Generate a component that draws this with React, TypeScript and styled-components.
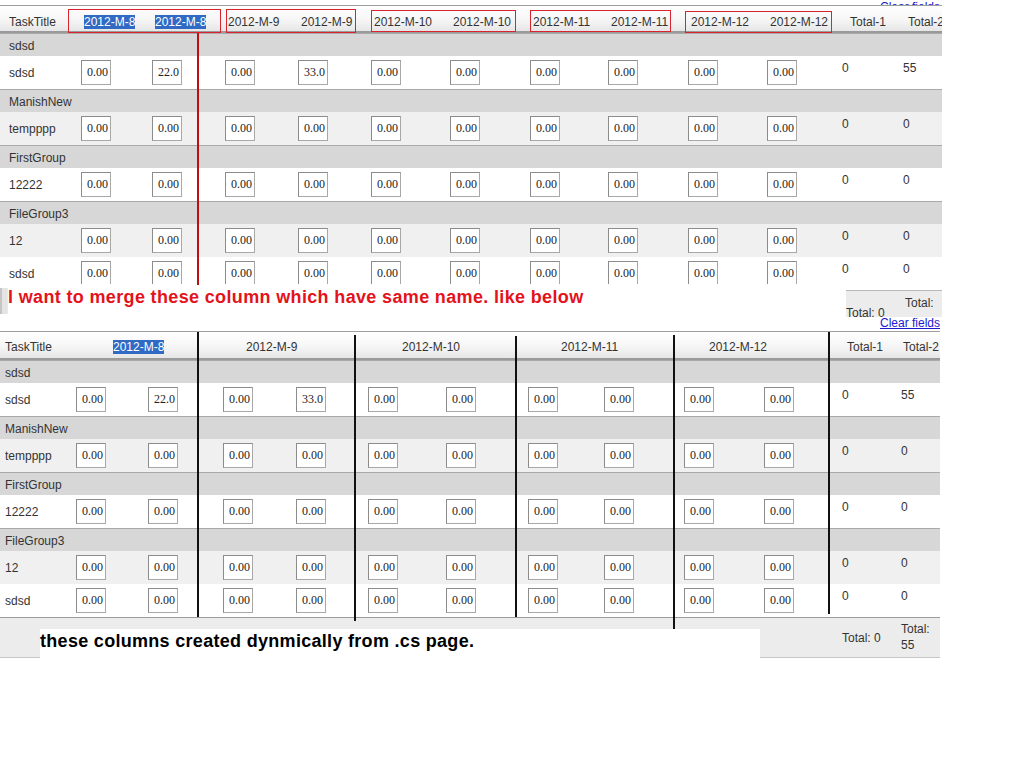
import React from 'react';
import styled, { createGlobalStyle } from 'styled-components';

const GlobalStyle = createGlobalStyle`
  html, body { margin: 0; padding: 0; background: #ffffff; }
  body { font-family: "Liberation Sans", Arial, sans-serif; font-size: 12px; color: #333333; }
  * { box-sizing: border-box; }
`;

type Line = { label: string; vals: string[]; t1: string; t2: string };
type Group = { name: string; rows: Line[] };

const Z = Array(10).fill('0.00');
const GROUPS: Group[] = [
  { name: 'sdsd', rows: [{ label: 'sdsd', vals: ['0.00', '22.0', '0.00', '33.0', '0.00', '0.00', '0.00', '0.00', '0.00', '0.00'], t1: '0', t2: '55' }] },
  { name: 'ManishNew', rows: [{ label: 'tempppp', vals: Z, t1: '0', t2: '0' }] },
  { name: 'FirstGroup', rows: [{ label: '12222', vals: Z, t1: '0', t2: '0' }] },
  { name: 'FileGroup3', rows: [{ label: '12', vals: Z, t1: '0', t2: '0' }, { label: 'sdsd', vals: Z, t1: '0', t2: '0' }] },
];
const MONTHS = ['2012-M-8', '2012-M-9', '2012-M-10', '2012-M-11', '2012-M-12'];

type Layout = {
  cols: string;
  pad: number;
  labelPad: number;
  headTop: number;
  totalPad: [number, number];
};

const TOP: Layout = {
  cols: '72px 71px 73px 73px 73px 79px 80px 78px 80px 79px 79px 59px 60px',
  pad: 9,
  labelPad: 9,
  headTop: 9,
  totalPad: [5, 7],
};

const BOTTOM: Layout = {
  cols: '71px 72px 75px 73px 72px 78px 82px 76px 80px 80px 78px 59px 44px',
  pad: 5,
  labelPad: 5,
  headTop: 8,
  totalPad: [5, 5],
};

/* ---------- page ---------- */
const Page = styled.div`
  width: 1024px;
  height: 768px;
  overflow: hidden;
  background: #fff;
`;

const Panel = styled.div<{ $w: number }>`
  position: relative;
  width: ${p => p.$w}px;
  overflow: hidden;
`;

const TopClip = styled.div`
  height: 5px;
  overflow: hidden;
  text-align: right;
  padding-right: 2px;
`;

const ClipLink = styled.a`
  display: inline-block;
  margin-top: -11px;
  line-height: 14px;
  color: #1a1ad0;
  text-decoration: underline;
  font-size: 12px;
`;

/* ---------- grid rows ---------- */
const Row = styled.div<{ $cols: string }>`
  display: grid;
  grid-template-columns: ${p => p.$cols};
`;

const HeaderRow = styled(Row)<{ $h: number }>`
  height: ${p => p.$h}px;
  border-top: 1px solid #9e9e9e;
  border-bottom: 2px solid #9a9a9a;
  background: linear-gradient(#ffffff 0%, #f6f6f6 55%, #e6e6e6 100%);
`;

const HeadCell = styled.div<{ $pad: number; $top: number; $span?: number }>`
  grid-column: span ${p => p.$span ?? 1};
  padding-left: ${p => p.$pad}px;
  padding-top: ${p => p.$top}px;
  line-height: 14px;
  white-space: nowrap;
  color: #333;
`;

const Mark = styled.span`
  background: #316ac5;
  color: #ffffff;
`;

const GroupRow = styled(Row)`
  height: 23px;
  border-top: 1px solid #a9a9a9;
  background: #d7d7d7;
`;

const GroupName = styled.div<{ $pad: number }>`
  grid-column: 1 / -1;
  padding-left: ${p => p.$pad}px;
  padding-top: 5px;
  line-height: 14px;
  color: #333;
`;

const DataRow = styled(Row)<{ $alt: boolean; $clip: boolean }>`
  height: ${p => (p.$clip ? 27 : 33)}px;
  overflow: hidden;
  background: ${p => (p.$alt ? '#f0f0f0' : '#ffffff')};
`;

const Cell = styled.div<{ $pad: number }>`
  height: 33px;
  display: flex;
  align-items: center;
  padding-left: ${p => p.$pad}px;
  line-height: 14px;
  white-space: nowrap;
  color: #333;
`;

const TotalCell = styled(Cell)`
  align-items: flex-start;
  padding-top: 5px;
`;

const ValueBox = styled.input`
  width: 30px;
  height: 25px;
  margin: 0;
  padding: 0 2px 0 0;
  border: 1px solid #a8a8a8;
  border-top-color: #8c8c8c;
  border-left-color: #8c8c8c;
  background: #ffffff;
  font-family: "Liberation Serif", "Times New Roman", serif;
  font-size: 12px;
  color: #222;
  text-align: right;
  outline: none;
`;

/* ---------- top annotation strip ---------- */
const Strip = styled.div`
  display: flex;
  height: 33px;
`;

const Sliver = styled.div`
  width: 8px;
  margin-top: 4px;
  height: 26px;
  background: #e4e4e4;
  border-left: 2px solid #c4c4c4;
  border-right: 1px solid #e9e9e9;
`;

const RedNote = styled.div`
  flex: 1;
  padding-top: 3px;
  font-size: 18px;
  line-height: 20px;
  font-weight: bold;
  letter-spacing: 0.35px;
  color: #e3131b;
  white-space: nowrap;
  background: #fff;
`;

const TopFoot = styled.div`
  width: 96px;
  margin-top: 6px;
  height: 27px;
  overflow: hidden;
  background: #ececec;
  border-top: 1px solid #b8b8b8;
  display: grid;
  grid-template-columns: 59px 37px;
`;

const FootText = styled.div<{ $top: number; $pad: number }>`
  padding-top: ${p => p.$top}px;
  padding-left: ${p => p.$pad}px;
  line-height: 14px;
  white-space: nowrap;
  color: #333;
`;

const ClearRow = styled.div`
  height: 14px;
  text-align: right;
  padding-right: 2px;
  line-height: 13px;
`;

const ClearLink = styled.a`
  color: #1a1ad0;
  text-decoration: underline;
  font-size: 12px;
`;

/* ---------- bottom footer ---------- */
const BottomFoot = styled.div`
  display: flex;
  height: 41px;
  border-top: 1px solid #9c9c9c;
  background: #ececec;
`;

const FootSide = styled.div<{ $w: number }>`
  width: ${p => p.$w}px;
  border-bottom: 1px solid #c6c6c6;
`;

const FootMid = styled.div`
  width: 720px;
  display: flex;
  flex-direction: column;
`;

const FootGap = styled.div`
  height: 11px;
`;

const BlackNote = styled.div`
  flex: 1;
  background: #ffffff;
  padding-top: 2px;
  font-size: 18px;
  line-height: 20px;
  font-weight: bold;
  letter-spacing: 0.3px;
  color: #000;
  white-space: nowrap;
`;

const FootTotals = styled.div`
  width: 180px;
  border-bottom: 1px solid #c6c6c6;
  display: grid;
  grid-template-columns: 136px 44px;
`;

const FootTotalA = styled.div`
  align-self: center;
  padding-left: 82px;
  line-height: 14px;
  white-space: nowrap;
  color: #333;
`;

const FootTotalB = styled.div`
  padding-left: 5px;
  padding-top: 3px;
  line-height: 16px;
  color: #333;
`;

/* ---------- annotations drawn over the screenshot ---------- */
const RedBox = styled.div<{ $x: number; $y: number; $w: number; $h: number }>`
  position: absolute;
  left: ${p => p.$x}px;
  top: ${p => p.$y}px;
  width: ${p => p.$w}px;
  height: ${p => p.$h}px;
  border: 1px solid #d9232e;
  pointer-events: none;
`;

const Stroke = styled.div<{ $x: number; $y: number; $h: number; $c: string }>`
  position: absolute;
  left: ${p => p.$x}px;
  top: ${p => p.$y}px;
  width: 2px;
  height: ${p => p.$h}px;
  background: ${p => p.$c};
  pointer-events: none;
`;

/* ---------- body ---------- */
function Body({ layout, clipLast }: { layout: Layout; clipLast: boolean }) {
  let idx = 0;
  return (
    <>
      {GROUPS.map(g => (
        <React.Fragment key={g.name + g.rows[0].label}>
          <GroupRow $cols={layout.cols}>
            <GroupName $pad={layout.labelPad}>{g.name}</GroupName>
          </GroupRow>
          {g.rows.map(r => {
            const i = idx++;
            return (
              <DataRow key={i} $cols={layout.cols} $alt={i % 2 === 1} $clip={clipLast && i === 4}>
                <Cell $pad={layout.labelPad}>{r.label}</Cell>
                {r.vals.map((v, k) => (
                  <Cell key={k} $pad={layout.pad}>
                    <ValueBox readOnly value={v} />
                  </Cell>
                ))}
                <TotalCell $pad={layout.totalPad[0]}>{r.t1}</TotalCell>
                <TotalCell $pad={layout.totalPad[1]}>{r.t2}</TotalCell>
              </DataRow>
            );
          })}
        </React.Fragment>
      ))}
    </>
  );
}

const MERGE_OFFSETS = [42, 28, 39, 38, 30];

export default function App() {
  return (
    <Page>
      <GlobalStyle />
      <Panel $w={942}>
        <TopClip>
          <ClipLink>Clear fields</ClipLink>
        </TopClip>
        <HeaderRow $cols={TOP.cols} $h={28}>
          <HeadCell $pad={9} $top={TOP.headTop}>TaskTitle</HeadCell>
          {MONTHS.flatMap((m, mi) =>
            [0, 1].map(k => (
              <HeadCell key={m + k} $pad={12} $top={TOP.headTop}>
                {mi === 0 ? <Mark>{m}</Mark> : m}
              </HeadCell>
            ))
          )}
          <HeadCell $pad={13} $top={TOP.headTop}>Total-1</HeadCell>
          <HeadCell $pad={12} $top={TOP.headTop}>Total-2</HeadCell>
        </HeaderRow>
        <Body layout={TOP} clipLast />
        <Strip>
          <Sliver />
          <RedNote>I want to merge these column which have same name. like below</RedNote>
          <TopFoot>
            <FootText $top={15} $pad={0}>Total: 0</FootText>
            <FootText $top={5} $pad={0}>Total:</FootText>
          </TopFoot>
        </Strip>
        <ClearRow>
          <ClearLink>Clear fields</ClearLink>
        </ClearRow>

        <RedBox $x={68} $y={9} $w={153} $h={24} />
        <RedBox $x={226} $y={9} $w={130} $h={24} />
        <RedBox $x={371} $y={10} $w={145} $h={22} />
        <RedBox $x={530} $y={10} $w={141} $h={22} />
        <RedBox $x={685} $y={11} $w={147} $h={22} />
        <Stroke $x={197} $y={33} $h={252} $c="#c40d12" />
      </Panel>

      <Panel $w={940}>
        <HeaderRow $cols={BOTTOM.cols} $h={29}>
          <HeadCell $pad={5} $top={BOTTOM.headTop}>TaskTitle</HeadCell>
          {MONTHS.map((m, mi) => (
            <HeadCell key={m} $pad={MERGE_OFFSETS[mi]} $top={BOTTOM.headTop} $span={2}>
              {mi === 0 ? <Mark>{m}</Mark> : m}
            </HeadCell>
          ))}
          <HeadCell $pad={10} $top={BOTTOM.headTop}>Total-1</HeadCell>
          <HeadCell $pad={7} $top={BOTTOM.headTop}>Total-2</HeadCell>
        </HeaderRow>
        <Body layout={BOTTOM} clipLast={false} />
        <BottomFoot>
          <FootSide $w={40} />
          <FootMid>
            <FootGap />
            <BlackNote>these columns created dynmically from .cs page.</BlackNote>
          </FootMid>
          <FootTotals>
            <FootTotalA>Total: 0</FootTotalA>
            <FootTotalB>
              Total:
              <br />
              55
            </FootTotalB>
          </FootTotals>
        </BottomFoot>

        <Stroke $x={197} $y={1} $h={285} $c="#111" />
        <Stroke $x={354} $y={4} $h={286} $c="#111" />
        <Stroke $x={515} $y={5} $h={281} $c="#111" />
        <Stroke $x={673} $y={4} $h={294} $c="#111" />
        <Stroke $x={828} $y={1} $h={282} $c="#111" />
      </Panel>
    </Page>
  );
}
